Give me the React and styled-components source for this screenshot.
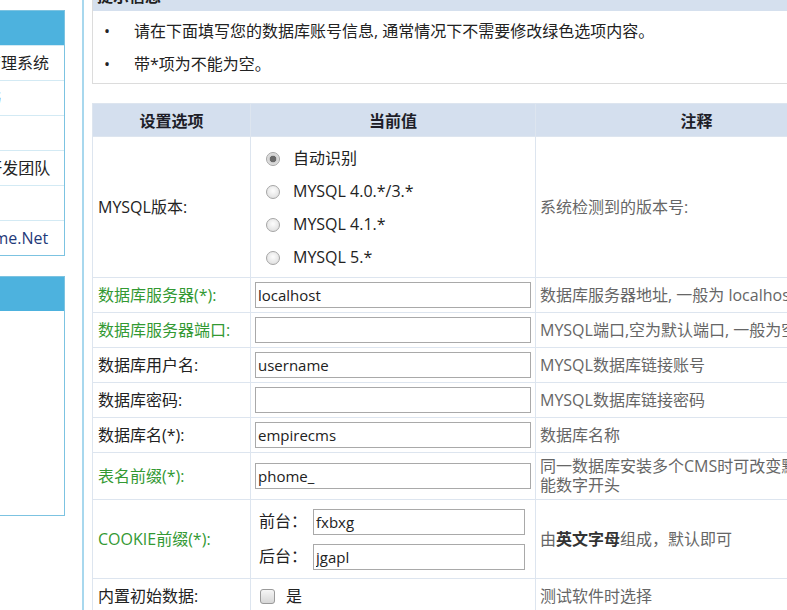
import React from 'react';
import styled, { createGlobalStyle } from 'styled-components';

const GlobalStyle = createGlobalStyle`
  html, body {
    margin: 0;
    padding: 0;
    background: #fff;
    overflow: hidden;
  }
  body {
    font-family: "Open Sans", "Noto Sans CJK SC", sans-serif;
    font-size: 16px;
    color: #222;
  }
`;

// page is scrolled a little to the right, so the left menu is cut off
const Page = styled.div`
  display: flex;
  align-items: stretch;
  width: 1100px;
  min-height: 610px;
  margin-left: -140px;
`;

const Sidebar = styled.aside`
  flex: none;
  width: 205px;
  padding-top: 10px;
  display: flex;
  flex-direction: column;
  gap: 20px;
`;

const SideBox = styled.div`
  border: 1px solid #7cc3e1;
  background: #fff;
`;

const SideHeader = styled.div`
  height: 34px;
  background: #4db2de;
`;

const SideItem = styled.div`
  height: 34px;
  line-height: 34px;
  border-top: 1px solid #d3eaf4;
  padding-left: 60px;
  white-space: nowrap;
  color: ${p => (p.link ? '#1f3a7a' : '#222')};
`;

const SideBody = styled.div`
  height: 204px;
`;

const Divider = styled.div`
  flex: none;
  width: 2px;
  margin-left: 17px;
  background: #a8d8ee;
`;

const Main = styled.main`
  flex: none;
  width: 765px;
  padding-left: 8px;
`;

const NoticeBox = styled.section`
  margin-top: -20px;
  border: 1px solid #dcdcdc;
`;

const NoticeTitle = styled.div`
  height: 30px;
  line-height: 30px;
  padding-left: 4px;
  background: #d5e0ee;
  font-weight: bold;
`;

const NoticeList = styled.ul`
  margin: 0;
  padding: 4px 0 2px;
  list-style: none;
`;

const NoticeItem = styled.li`
  display: flex;
  line-height: 33px;
  white-space: nowrap;

  &::before {
    content: '•';
    flex: none;
    width: 30px;
    padding-left: 11px;
  }
`;

const Table = styled.table`
  margin-top: 19px;
  width: 765px;
  border-collapse: collapse;
  table-layout: fixed;
`;

const Th = styled.th`
  height: 32px;
  padding: 0;
  background: #d4dfee;
  border: 1px solid #dde5ef;
  font-weight: bold;
  color: #1e1e28;
`;

const Td = styled.td`
  border: 1px solid #dde5ef;
  padding: 4px;
  line-height: 19px;
  vertical-align: middle;
`;

const LabelCell = styled(Td)`
  padding-left: 5px;
  color: ${p => (p.green ? '#339933' : '#222')};
  white-space: nowrap;
`;

const NoteCell = styled(Td)`
  color: #666;
`;

const Strong = styled.b`
  color: #333;
`;

const Field = styled.input`
  display: block;
  box-sizing: border-box;
  width: ${p => p.w || 276}px;
  height: 26px;
  margin: 0;
  padding: 0 2px;
  border: 1px solid #a9a9a9;
  font-family: "Open Sans", sans-serif;
  font-size: 15px;
  color: #222;
  outline: none;
`;

const RadioCell = styled(Td)`
  padding: 5px 4px 3px 15px;
`;

const RadioLine = styled.label`
  display: flex;
  align-items: center;
  height: 33px;
`;

const Radio = styled.input.attrs({ type: 'radio', name: 'mysqlver' })`
  appearance: none;
  flex: none;
  width: 14px;
  height: 14px;
  margin: 0 13px 0 0;
  border: 1px solid #a6a6a6;
  border-radius: 50%;
  background: radial-gradient(circle at 50% 40%, #fdfdfd, #d9d9d9);

  &:checked {
    background: radial-gradient(circle, #6a6a6a 0 3px, #cfcfcf 3.6px, #f6f6f6 100%);
  }
`;

const CookieLine = styled.div`
  display: flex;
  align-items: center;
  height: 35px;
  padding-left: 4px;
`;

const CookieLabel = styled.span`
  flex: none;
  width: 54px;
`;

const CheckLine = styled.label`
  display: flex;
  align-items: center;
  height: 26px;
`;

const Checkbox = styled.input.attrs({ type: 'checkbox' })`
  appearance: none;
  flex: none;
  width: 15px;
  height: 15px;
  margin: 0 11px 0 5px;
  border: 1px solid #9a9a9a;
  border-radius: 3px;
  background: linear-gradient(#f6f6f6, #d6d6d6);
`;

const textRows = [
  { label: '数据库服务器(*):', green: true, value: 'localhost', note: '数据库服务器地址, 一般为 localhost' },
  { label: '数据库服务器端口:', green: true, value: '', note: 'MYSQL端口,空为默认端口, 一般为空' },
  { label: '数据库用户名:', value: 'username', note: 'MYSQL数据库链接账号' },
  { label: '数据库密码:', value: '', note: 'MYSQL数据库链接密码' },
  { label: '数据库名(*):', value: 'empirecms', note: '数据库名称' },
  { label: '表名前缀(*):', green: true, value: 'phome_', note: '同一数据库安装多个CMS时可改变默认值,不能数字开头' },
];

const versions = ['自动识别', 'MYSQL 4.0.*/3.*', 'MYSQL 4.1.*', 'MYSQL 5.*'];

export default function App() {
  return (
    <>
      <GlobalStyle />
      <Page>
        <Sidebar>
          <SideBox>
            <SideHeader />
            <SideItem>帝国网站管理系统</SideItem>
            <SideItem>安装协议书</SideItem>
            <SideItem>官方网站</SideItem>
            <SideItem>帝国CMS开发团队</SideItem>
            <SideItem>技术论坛</SideItem>
            <SideItem link>www.PHome.Net</SideItem>
          </SideBox>
          <SideBox>
            <SideHeader />
            <SideBody />
          </SideBox>
        </Sidebar>
        <Divider />
        <Main>
          <NoticeBox>
            <NoticeTitle>提示信息</NoticeTitle>
            <NoticeList>
              <NoticeItem>请在下面填写您的数据库账号信息, 通常情况下不需要修改绿色选项内容。</NoticeItem>
              <NoticeItem>带*项为不能为空。</NoticeItem>
            </NoticeList>
          </NoticeBox>

          <Table>
            <colgroup>
              <col style={{ width: 158 }} />
              <col style={{ width: 285 }} />
              <col style={{ width: 322 }} />
            </colgroup>
            <thead>
              <tr>
                <Th>设置选项</Th>
                <Th>当前值</Th>
                <Th>注释</Th>
              </tr>
            </thead>
            <tbody>
              <tr>
                <LabelCell>MYSQL版本:</LabelCell>
                <RadioCell>
                  {versions.map((v, i) => (
                    <RadioLine key={v}>
                      <Radio defaultChecked={i === 0} />
                      {v}
                    </RadioLine>
                  ))}
                </RadioCell>
                <NoteCell>系统检测到的版本号:</NoteCell>
              </tr>
              {textRows.map(r => (
                <tr key={r.label}>
                  <LabelCell green={r.green}>{r.label}</LabelCell>
                  <Td>
                    <Field defaultValue={r.value} />
                  </Td>
                  <NoteCell>{r.note}</NoteCell>
                </tr>
              ))}
              <tr>
                <LabelCell green>COOKIE前缀(*):</LabelCell>
                <Td>
                  <CookieLine>
                    <CookieLabel>前台：</CookieLabel>
                    <Field w={212} defaultValue="fxbxg" />
                  </CookieLine>
                  <CookieLine>
                    <CookieLabel>后台：</CookieLabel>
                    <Field w={212} defaultValue="jgapl" />
                  </CookieLine>
                </Td>
                <NoteCell>
                  由<Strong>英文字母</Strong>组成，默认即可
                </NoteCell>
              </tr>
              <tr>
                <LabelCell>内置初始数据:</LabelCell>
                <Td>
                  <CheckLine>
                    <Checkbox />是
                  </CheckLine>
                </Td>
                <NoteCell>测试软件时选择</NoteCell>
              </tr>
            </tbody>
          </Table>
        </Main>
      </Page>
    </>
  );
}
